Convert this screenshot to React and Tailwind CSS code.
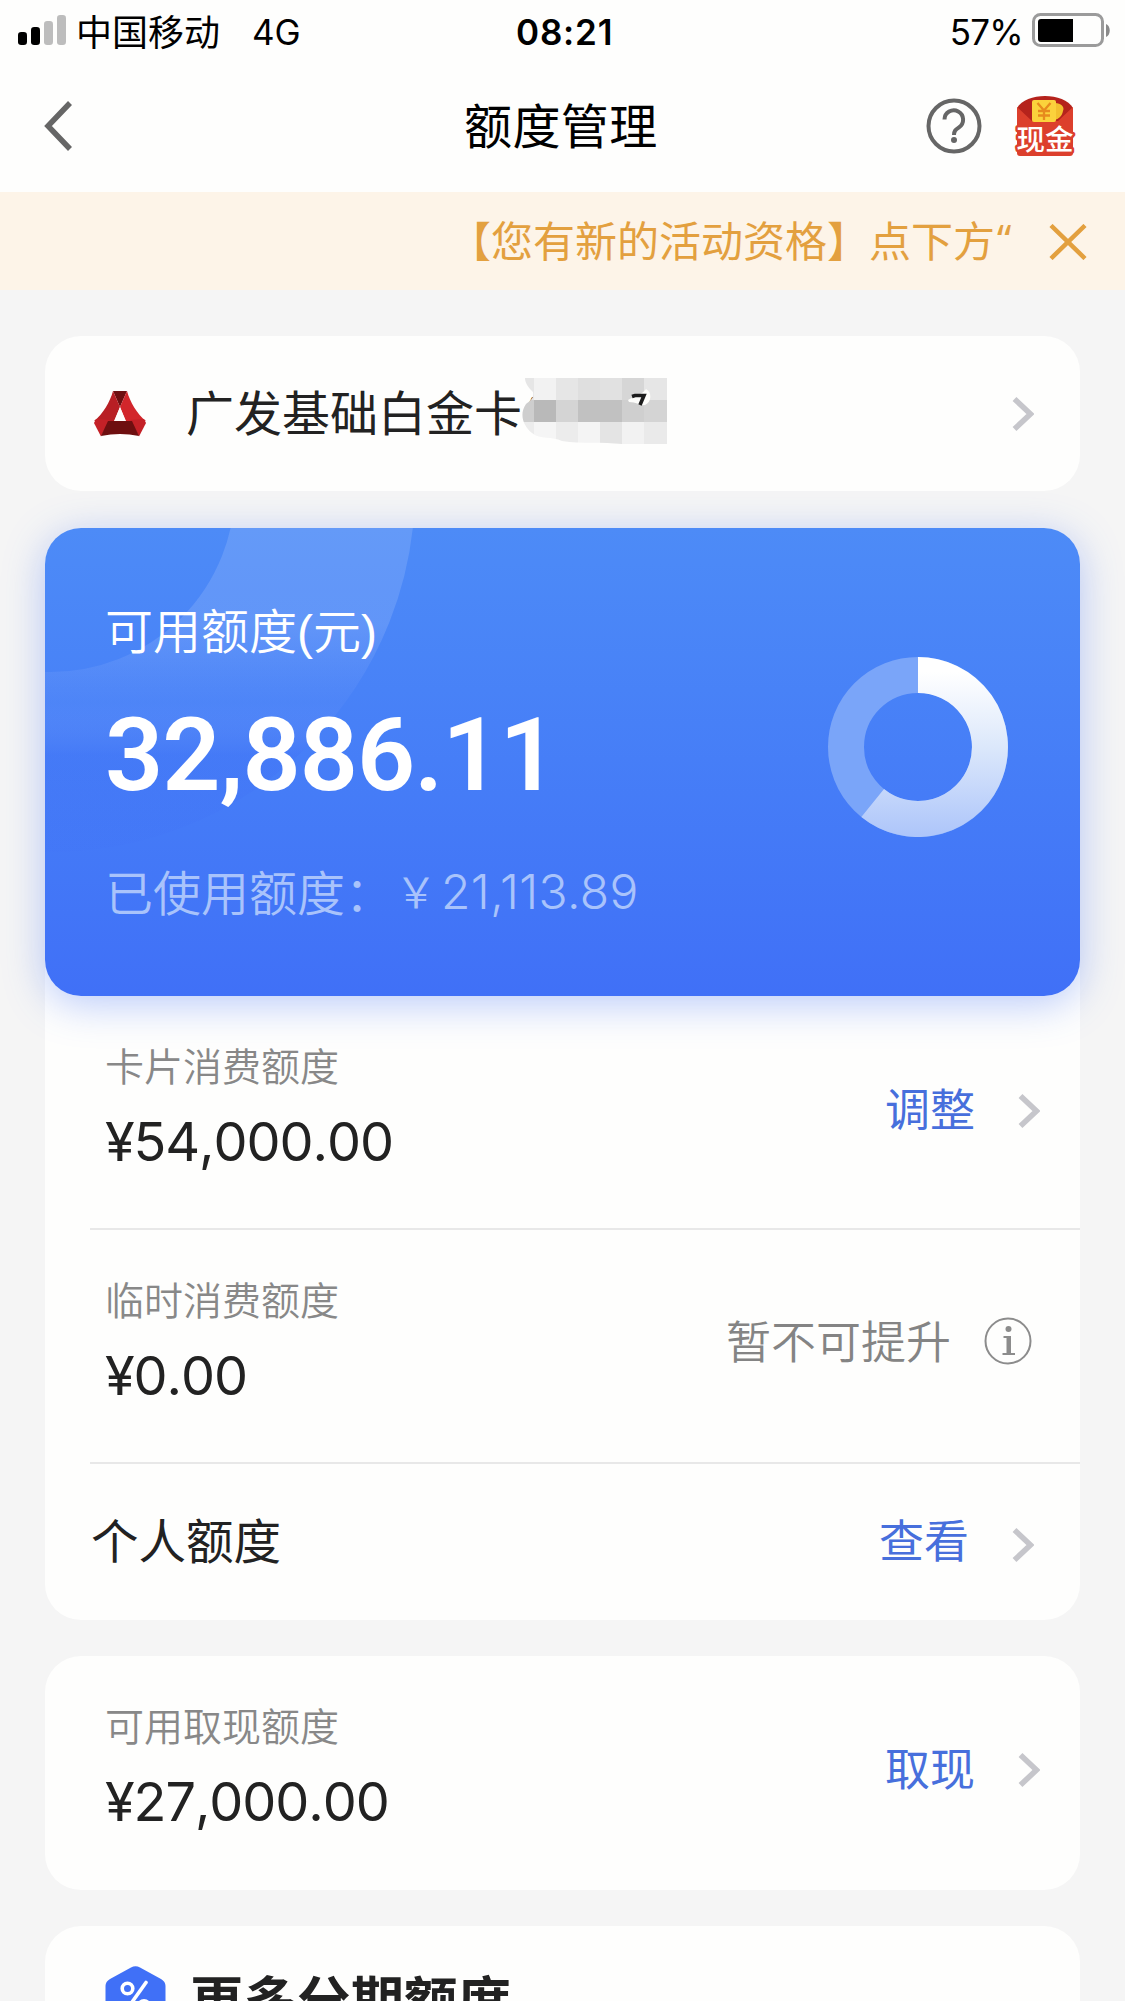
import React from "react";

function StatusBar() {
  return (
    <div className="flex h-[60px] items-center pl-[18px] pr-[14px] text-black">
      <svg width="49" height="31" viewBox="0 0 49 31" className="shrink-0">
        <rect x="0" y="17" width="9" height="13" rx="3.2" fill="#000" />
        <rect x="13" y="12" width="9" height="18" rx="3.2" fill="#000" />
        <rect x="26" y="6" width="9" height="24" rx="3.2" fill="#bdbdbd" />
        <rect x="39" y="0" width="9" height="30" rx="3.2" fill="#bdbdbd" />
      </svg>
      <span className="ml-[9px] w-[176px] whitespace-nowrap font-['Noto_Sans_CJK_SC',sans-serif] text-[36px] leading-[60px]">中国移动</span>
      <span className="w-[264px] pt-[3px] font-['Inter',sans-serif] text-[35px] leading-[60px]">4G</span>
      <span className="pt-[3px] font-['Inter',sans-serif] text-[35px] font-semibold leading-[60px] tracking-[0.8px]">08:21</span>
      <span className="ml-auto pt-[3px] font-['Inter',sans-serif] text-[35px] leading-[60px] tracking-[-0.7px]">57%</span>
      <svg width="79" height="36" viewBox="0 0 79 36" className="ml-[9px] shrink-0">
        <rect x="1.5" y="2.5" width="69" height="31" rx="7" fill="none" stroke="#9b9b9b" strokeWidth="3" />
        <path d="M9 7h32v23H9a3 3 0 0 1-3-3V10a3 3 0 0 1 3-3z" fill="#000" />
        <path d="M74 12c5 2 5 11 0 13z" fill="#8a8a8a" />
      </svg>
    </div>
  );
}

function Envelope() {
  return (
    <svg width="62" height="62" viewBox="0 0 62 62" className="ml-[32px] shrink-0">
      <path d="M3 13C12 -3 50 -3 59 13V50H3z" fill="#b5231c" />
      <path d="M3 12L18 26H44L59 12V58a3 3 0 0 1-3 3H6a3 3 0 0 1-3-3z" fill="#dc3f2c" />
      <path d="M41 8c6 0 10 4 8 8-1 5-4 8-9 9z" fill="#f3c02f" />
      <rect x="18" y="5" width="24" height="22" rx="2" fill="#fbd23c" />
      <path d="M23.500 8L30 15.500L36.500 8M30 15.500V25M24 16H36M24 20.500H36" fill="none" stroke="#e78a1d" strokeWidth="2.300" />
      <text x="31" y="55" textAnchor="middle" fontSize="28.5" fontWeight="500" fill="#fff" stroke="#dc3f2c" strokeWidth="5" strokeLinejoin="round" paintOrder="stroke" fontFamily="Noto Sans CJK SC">现金</text>
    </svg>
  );
}

function NavBar() {
  return (
    <div className="flex h-[132px] items-center pl-[44px] pr-[49px]">
      <svg width="30" height="50" viewBox="0 0 30 50" className="mt-[-1px] shrink-0">
        <path d="M26 2L4 25L26 48" fill="none" stroke="#666" strokeWidth="5.500" />
      </svg>
      <h1 className="ml-[390px] mt-[-7px] whitespace-nowrap font-['Noto_Sans_CJK_SC',sans-serif] text-[48px] font-normal leading-[60px] tracking-[0.4px] text-black">额度管理</h1>
      <svg width="56" height="56" viewBox="0 0 56 56" className="ml-auto shrink-0">
        <circle cx="28" cy="28" r="25.5" fill="none" stroke="#666" strokeWidth="4" />
        <path d="M18.500 21.500a9.300 9.300 0 1 1 14.500 7.800c-3.500 2.300-5 3.600-5 7.700" fill="none" stroke="#666" strokeWidth="4" />
        <circle cx="28" cy="42" r="3" fill="#666" />
      </svg>
      <Envelope />
    </div>
  );
}

function Banner() {
  return (
    <div className="flex h-[98px] shrink-0 items-center overflow-hidden bg-[#fdf4e8] pl-[449px] text-[#e3a03f]">
      <div className="flex w-[565px] shrink-0 overflow-hidden whitespace-nowrap pb-[5px] font-['Noto_Sans_CJK_SC',sans-serif] text-[42px] leading-[60px]">
        <span>【您有新的活动资格】点下方</span>
        <span className="ml-[2px] font-['Noto_Sans',sans-serif] text-[40px]">“</span>
      </div>
      <svg width="38" height="36" viewBox="0 0 38 36" className="ml-[35px] mt-[2px] shrink-0">
        <path d="M2 1.500L36 34.500M36 1.500L2 34.500" stroke="#e3a03f" strokeWidth="4.500" />
      </svg>
    </div>
  );
}

function Chevron() {
  return (
    <svg width="22" height="36" viewBox="0 0 22 36" className="shrink-0">
      <path d="M2.500 3L18.500 18L2.500 33" fill="none" stroke="#c6c6cb" strokeWidth="5.600" />
    </svg>
  );
}

function Mosaic() {
  const cells = [
    [0, 0, 12, 22, "#e6e6e6"], [12, 0, 22, 22, "#f2f2f2"], [34, 0, 22, 22, "#e6e6e6"], [56, 0, 22, 22, "#dfdfdf"], [78, 0, 22, 22, "#e1e1e1"], [100, 0, 22, 22, "#d6d6d6"], [122, 0, 23, 22, "#e6e6e6"],
    [0, 22, 12, 22, "#cecece"], [12, 22, 22, 22, "#b9b9b9"], [34, 22, 22, 22, "#d4d4d4"], [56, 22, 44, 22, "#c1c1c1"], [100, 22, 22, 22, "#cfcfcf"], [122, 22, 23, 22, "#d4d4d4"],
    [0, 44, 12, 22, "#ececec"], [12, 44, 22, 22, "#f5f5f5"], [34, 44, 22, 22, "#ececec"], [56, 44, 22, 22, "#f4f4f4"], [78, 44, 22, 22, "#e4e4e4"], [100, 44, 22, 22, "#f2f2f2"], [122, 44, 23, 22, "#eaeaea"],
  ];
  return (
    <svg width="145" height="70" viewBox="0 0 145 70" className="absolute left-[477px] top-[42px]">
      <clipPath id="smudge">
        <path d="M3 0H145V66H100C80 64 60 66 40 63C30 58 18 62 10 55C1 48-3 36 4 26C9 22 12 20 11 14C6 9 3 5 3 0z" />
      </clipPath>
      <path d="M4 40H20V70H4z" fill="#fefefd" />
      <path d="M12 0H34V22H12z" fill="#fefefd" />
      <g clipPath="url(#smudge)">
        {cells.map(([x, y, w, h, c], i) => <rect key={i} x={x} y={y} width={w} height={h} fill={c} shapeRendering="crispEdges" />)}
      </g>
      <path d="M106 22C112 18 120 17 124 11C130 14 130 24 123 27C118 28 115 24 107 24z" fill="#fdfdfb" />
      <path d="M110 18.500L113 17.500H122L118 27" fill="none" stroke="#1c1c1c" strokeWidth="3.600" />
    </svg>
  );
}

function CardSelector() {
  return (
    <section className="relative mt-[46px] flex h-[155px] items-center rounded-[36px] bg-[#fefefd] pl-[48px] pr-[46px]">
      <svg width="54" height="48" viewBox="0 0 54 48" className="shrink-0">
        <path d="M20 1H34L27 17z" fill="#6e0f10" />
        <path d="M20 1L27 17L21 31H1C10 24 17 12 20 1z" fill="#b81f24" />
        <path d="M34 1L27 17L33 31H53C44 24 37 12 34 1z" fill="#d2262b" />
        <path d="M27 17L21.500 31H32.500z" fill="#fefefd" />
        <path d="M1 33L3 29L17 30L8 46.500z" fill="#c42127" />
        <path d="M53 33L51 29L37 30L46 46.500z" fill="#c42127" />
        <path d="M15 31H39L46 46Q27 42 8 46z" fill="#6e0f10" />
      </svg>
      <div className="ml-[39px] mt-[-3px] whitespace-nowrap font-['Noto_Sans_CJK_SC',sans-serif] text-[48px] leading-[60px] text-[#222]">
        广发基础白金卡<span className="font-['Inter',sans-serif] text-[44px]">(</span>
      </div>
      <Mosaic />
      <div className="ml-auto"><Chevron /></div>
    </section>
  );
}

function Donut() {
  return (
    <svg width="180" height="180" viewBox="-90 -90 180 180" className="absolute right-[72px] top-[129px]">
      <defs>
        <linearGradient id="used" gradientUnits="userSpaceOnUse" x1="0" y1="-75" x2="0" y2="90">
          <stop offset="0" stopColor="#fff" />
          <stop offset="0.450" stopColor="#dce8fb" />
          <stop offset="1" stopColor="#adc5fa" />
        </linearGradient>
      </defs>
      <circle r="72" fill="none" stroke="#7aa5f9" strokeWidth="36" />
      <path d="M0 -72A72 72 0 1 1 -45.300 56" fill="none" stroke="url(#used)" strokeWidth="36" />
    </svg>
  );
}

function BalanceCard() {
  return (
    <section className="relative z-10 h-[468px] rounded-[36px] bg-gradient-to-b from-[#4d8bf7] to-[#4070f7] pl-[60px] pt-[72px] shadow-[0_8px_40px_rgba(64,112,247,0.36)]">
      <svg width="420" height="467" viewBox="0 0 420 467" className="absolute left-0 top-0 rounded-l-[36px]">
        <defs>
          <linearGradient id="ring" gradientUnits="userSpaceOnUse" x1="0" y1="0" x2="0" y2="324">
            <stop offset="0" stopColor="#fff" stopOpacity="0.130" />
            <stop offset="0.300" stopColor="#fff" stopOpacity="0.130" />
            <stop offset="0.540" stopColor="#a8bcff" stopOpacity="0.060" />
            <stop offset="0.700" stopColor="#3f6cf5" stopOpacity="0.240" />
            <stop offset="1" stopColor="#3f6cf5" stopOpacity="0.080" />
          </linearGradient>
        </defs>
        <circle cx="6" cy="-40" r="274" fill="none" stroke="url(#ring)" strokeWidth="180" />
      </svg>
      <div className="relative">
        <div className="font-['Noto_Sans_CJK_SC',sans-serif] text-[48px] font-[350] leading-[56px] text-white">
          可用额度<span className="font-['Liberation_Sans',sans-serif]">(</span>元<span className="font-['Liberation_Sans',sans-serif]">)</span>
        </div>
        <div className="mt-[44px] h-[100px] font-['Roboto',sans-serif] text-[102px] font-semibold leading-[100px] tracking-[-1px] text-white">32,886.11</div>
        <div className="mt-[54px] flex items-center whitespace-nowrap font-['Noto_Sans_CJK_SC',sans-serif] text-[48px] font-[350] leading-[56px] text-[#a9c3fb]">
          <span className="w-[290px]">已使用额度：</span>
          <span className="w-[46px] text-[42px]">￥</span>
          <span className="pt-[5px] font-['Inter',sans-serif] text-[48px] font-light tracking-[0.4px]">21,113.89</span>
        </div>
      </div>
      <Donut />
    </section>
  );
}

function InfoIcon() {
  return (
    <svg width="48" height="48" viewBox="0 0 48 48" className="shrink-0">
      <circle cx="24" cy="24" r="22.500" fill="none" stroke="#8c8c8c" strokeWidth="2" />
      <circle cx="24.500" cy="12" r="3" fill="#8c8c8c" />
      <path d="M19.500 19H27V36H31V38H18.500V36H22.500V21H19.500z" fill="#8c8c8c" />
    </svg>
  );
}

function LimitRow({ label, amount, children, className }) {
  return (
    <div className={"flex items-start " + className}>
      <div>
        <div className="whitespace-nowrap font-['Noto_Sans_CJK_SC',sans-serif] text-[39px] font-[350] leading-[50px] text-[#888]">{label}</div>
        <div className="mt-[23px] font-['Inter',sans-serif] text-[54px] font-[370] leading-[60px] tracking-[-1.1px] text-[#222] [font-kerning:none]">{amount}</div>
      </div>
      <div className="ml-auto flex items-center">{children}</div>
    </div>
  );
}

function Action({ children }) {
  return <span className="mr-[43px] whitespace-nowrap pb-[6px] font-['Noto_Sans_CJK_SC',sans-serif] text-[45px] leading-[60px] text-[#476fdc]">{children}</span>;
}

export default function App() {
  return (
    <div className="flex h-[2001px] w-[1125px] flex-col overflow-hidden bg-[#f5f5f5]">
      <header className="shrink-0 bg-[#fefefd]">
        <StatusBar />
        <NavBar />
      </header>
      <Banner />
      <main className="h-[1711px] shrink-0 overflow-hidden px-[45px]">
        <CardSelector />
        <div className="mt-[37px]">
          <BalanceCard />
          <section className="mt-[-40px] h-[664px] rounded-b-[36px] bg-[#fefefd] pt-[40px]">
            <LimitRow label="卡片消费额度" amount="¥54,000.00" className="h-[232px] pl-[60px] pr-[40px] pt-[43px]">
              <div className="mt-[39px] flex items-center"><Action>调整</Action><Chevron /></div>
            </LimitRow>
            <div className="ml-[45px] h-[2px] bg-[#e8e8e8]" />
            <LimitRow label="临时消费额度" amount="¥0.00" className="h-[232px] pl-[60px] pr-[48px] pt-[43px]">
              <div className="mt-[37px] flex items-center">
                <span className="mr-[33px] whitespace-nowrap pb-[1px] font-['Noto_Sans_CJK_SC',sans-serif] text-[45px] font-[350] leading-[60px] text-[#848484]">暂不可提升</span>
                <InfoIcon />
              </div>
            </LimitRow>
            <div className="ml-[45px] h-[2px] bg-[#e8e8e8]" />
            <div className="flex h-[156px] items-center pl-[46px] pr-[46px]">
              <span className="pb-[6px] font-['Noto_Sans_CJK_SC',sans-serif] text-[47.500px] leading-[60px] text-[#222]">个人额度</span>
              <div className="ml-auto flex items-center"><Action>查看</Action><div className="pt-[5px]"><Chevron /></div></div>
            </div>
          </section>
        </div>
        <section className="mt-[36px] h-[234px] rounded-[36px] bg-[#fefefd]">
          <LimitRow label="可用取现额度" amount="¥27,000.00" className="pl-[60px] pr-[40px] pt-[43px]">
            <div className="mt-[38px] flex items-center"><Action>取现</Action><Chevron /></div>
          </LimitRow>
        </section>
        <section className="mt-[36px] flex h-[160px] items-start rounded-t-[36px] bg-[#fefefd] pl-[60px] pt-[39px]">
          <svg width="61" height="68" viewBox="0 0 61 68" className="shrink-0">
            <path d="M26 2.500Q30.500 0 35 2.500L56 14Q60.500 16.500 60.500 21V47Q60.500 51.500 56 54L35 66Q30.500 68 26 66L5 54Q.500 51.500 .500 47V21Q.500 16.500 5 14z" fill="#4070f7" />
            <g fill="none" stroke="#fff" strokeWidth="3.600" strokeLinecap="round">
              <circle cx="22.500" cy="23.500" r="5.300" />
              <circle cx="39" cy="41" r="5.300" />
              <path d="M41 17.500L20 47" />
            </g>
          </svg>
          <h2 className="ml-[24px] mt-[3px] whitespace-nowrap font-['Noto_Sans_CJK_SC',sans-serif] text-[53.500px] font-bold leading-[60px] text-[#222]">更多分期额度</h2>
        </section>
      </main>
    </div>
  );
}
